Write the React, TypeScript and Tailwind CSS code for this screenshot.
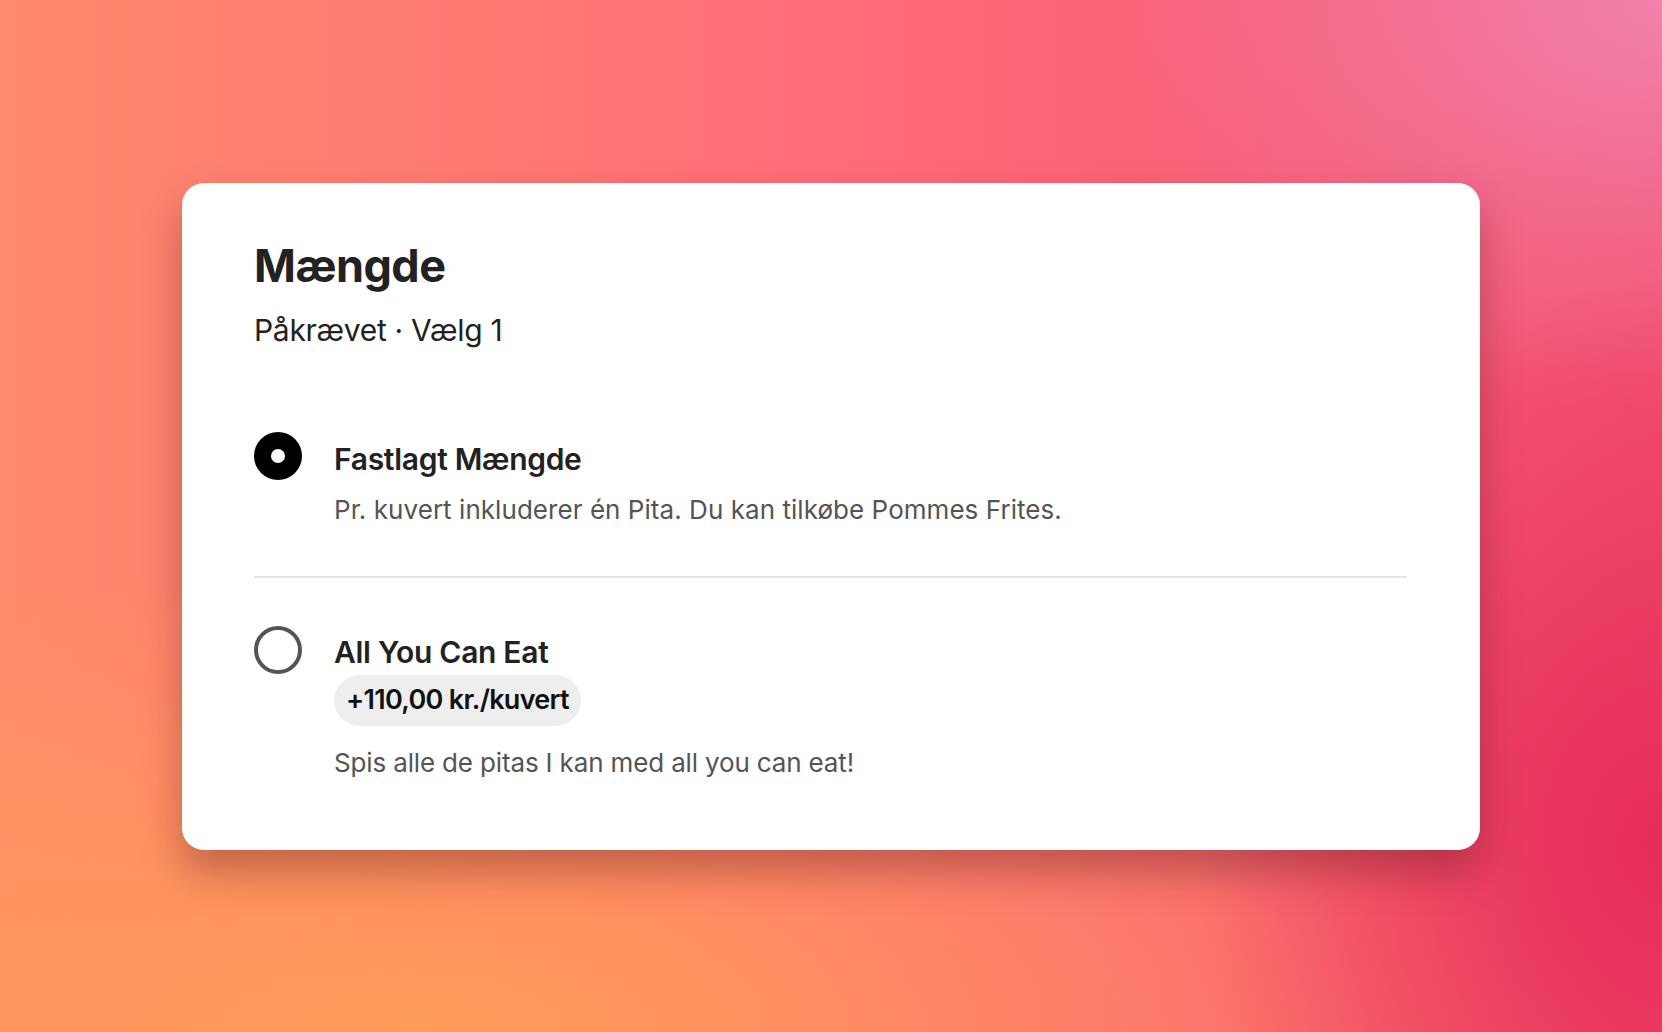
import React from "react";

function Radio({ selected }: { selected: boolean }) {
  return selected ? (
    <div className="w-[48px] h-[48px] rounded-full bg-black flex items-center justify-center shrink-0">
      <div className="w-[14px] h-[14px] rounded-full bg-white" />
    </div>
  ) : (
    <div className="w-[48px] h-[48px] rounded-full border-[4px] border-[#545454] bg-white shrink-0" />
  );
}

export default function App() {
  return (
    <div
      className="w-[1662px] h-[1032px] flex items-center justify-center overflow-hidden bg-[radial-gradient(ellipse_28%_55%_at_100%_82%,#e62c58_0%,rgba(230,44,88,0)_100%),radial-gradient(ellipse_35%_40%_at_100%_0%,#f282ac_0%,rgba(242,130,172,0)_100%),radial-gradient(ellipse_75%_45%_at_25%_100%,#ff9c58_0%,rgba(255,156,88,0)_100%),linear-gradient(to_right,#ff8a6c_0%,#ff6a7a_55%,#f2506e_100%)]"
      style={{ fontFamily: "Inter, 'Noto Sans', sans-serif" }}
    >
      <div className="w-[1298px] bg-white rounded-[22px] shadow-[0_22px_40px_rgba(80,20,20,0.35)] pl-[72px] pr-[73px] pt-[55px] pb-[71px]">
        <h1 className="text-[45px] leading-[56px] font-bold text-[#222222] tracking-[-0.5px]">Mængde</h1>
        <p className="mt-[16px] text-[30px] leading-[40px] text-[#222222] tracking-[-0.3px]">Påkrævet · Vælg 1</p>

        <div className="mt-[85px] flex gap-[32px] pb-[50px]">
          <div className="mt-[-3px]">
            <Radio selected={true} />
          </div>
          <div className="flex flex-col">
            <div className="text-[30px] leading-[48px] font-semibold text-[#222222] tracking-[-0.3px]">Fastlagt Mængde</div>
            <div className="mt-[11px] text-[26px] leading-[32px] text-[#545454] tracking-[0.05px]">
              Pr. kuvert inkluderer én Pita. Du kan tilkøbe Pommes Frites.
            </div>
          </div>
        </div>

        <div className="h-[2px] bg-[#e6e6e6]" />

        <div className="pt-[50px] flex gap-[32px]">
          <div className="mt-[-2px]">
            <Radio selected={false} />
          </div>
          <div className="flex flex-col items-start">
            <div className="text-[30px] leading-[48px] font-semibold text-[#222222] tracking-[-0.3px]">All You Can Eat</div>
            <div className="mt-[-1px] h-[51px] px-[12px] rounded-full bg-[#eeeeee] flex items-center text-[27px] font-semibold text-[#111111] tracking-[-0.7px]">
              +110,00 kr./kuvert
            </div>
            <div className="mt-[21px] text-[26px] leading-[32px] text-[#545454] tracking-[-0.15px]">
              Spis alle de pitas I kan med all you can eat!
            </div>
          </div>
        </div>
      </div>
    </div>
  );
}
